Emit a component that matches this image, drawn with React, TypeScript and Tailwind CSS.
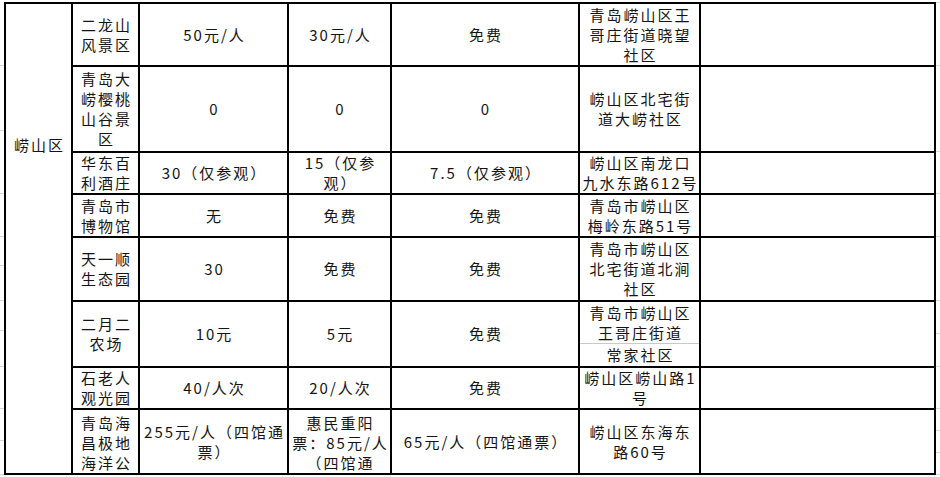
import React from "react";

type Cell = {
  lines: string[];
  top?: boolean;
  split?: { upper: string[]; lower: string[] };
};

type Row = {
  h: string;
  cells: Cell[];
};

// widths include the 2px right rule
const colW = ["w-[67px]", "w-[149px]", "w-[103px]", "w-[188px]", "w-[121px]", "w-[235px]"];

const rows: Row[] = [
  {
    h: "h-[63px]",
    cells: [
      { lines: ["二龙山", "风景区"] },
      { lines: ["50元/人"] },
      { lines: ["30元/人"] },
      { lines: ["免费"] },
      { lines: ["青岛崂山区王", "哥庄街道晓望", "社区"] },
      { lines: [] },
    ],
  },
  {
    h: "h-[86px]",
    cells: [
      { lines: ["青岛大", "崂樱桃", "山谷景", "区"] },
      { lines: ["0"] },
      { lines: ["0"] },
      { lines: ["0"] },
      { lines: ["崂山区北宅街", "道大崂社区"] },
      { lines: [] },
    ],
  },
  {
    h: "h-[42px]",
    cells: [
      { lines: ["华东百", "利酒庄"] },
      { lines: ["30（仅参观）"] },
      { lines: ["15（仅参", "观）"] },
      { lines: ["7.5（仅参观）"] },
      { lines: ["崂山区南龙口", "九水东路612号"] },
      { lines: [] },
    ],
  },
  {
    h: "h-[43px]",
    cells: [
      { lines: ["青岛市", "博物馆"] },
      { lines: ["无"] },
      { lines: ["免费"] },
      { lines: ["免费"] },
      { lines: ["青岛市崂山区", "梅岭东路51号"] },
      { lines: [] },
    ],
  },
  {
    h: "h-[64px]",
    cells: [
      { lines: ["天一顺", "生态园"] },
      { lines: ["30"] },
      { lines: ["免费"] },
      { lines: ["免费"] },
      { lines: ["青岛市崂山区", "北宅街道北涧", "社区"] },
      { lines: [] },
    ],
  },
  {
    h: "h-[66px]",
    cells: [
      { lines: ["二月二", "农场"] },
      { lines: ["10元"] },
      { lines: ["5元"] },
      { lines: ["免费"] },
      { lines: [], split: { upper: ["青岛市崂山区", "王哥庄街道"], lower: ["常家社区"] } },
      { lines: [] },
    ],
  },
  {
    h: "h-[42px]",
    cells: [
      { lines: ["石老人", "观光园"] },
      { lines: ["40/人次"] },
      { lines: ["20/人次"] },
      { lines: ["免费"] },
      { lines: ["崂山区崂山路1", "号"] },
      { lines: [] },
    ],
  },
  {
    // last row runs past the bottom of the shot, so only the visible lines are here
    h: "h-[65px]",
    cells: [
      { lines: ["青岛海", "昌极地", "海洋公"], top: true },
      { lines: ["255元/人（四馆通", "票）"] },
      { lines: ["惠民重阳", "票：85元/人", "（四馆通"], top: true },
      { lines: ["65元/人（四馆通票）"] },
      { lines: ["崂山区东海东", "路60号"] },
      { lines: [] },
    ],
  },
];

function Lines({ lines }: { lines: string[] }) {
  return (
    <>
      {lines.map((l, i) => (
        <div key={i} className="whitespace-nowrap pl-[2px] tracking-[2px] leading-[20px]">
          {l}
        </div>
      ))}
    </>
  );
}

function TableCell({ cell, w }: { cell: Cell; w: string }) {
  if (cell.split) {
    return (
      <div className={`${w} h-full shrink-0 border-r-2 border-black flex flex-col overflow-hidden`}>
        <div className="h-[42px] shrink-0 flex flex-col items-center justify-center border-b border-[#c9c9c9]">
          <Lines lines={cell.split.upper} />
        </div>
        <div className="flex-1 flex flex-col items-center justify-center">
          <Lines lines={cell.split.lower} />
        </div>
      </div>
    );
  }
  return (
    <div
      className={`${w} h-full shrink-0 border-r-2 border-black flex flex-col items-center overflow-hidden text-center ${
        cell.top ? "justify-start pt-[3px]" : "justify-center"
      }`}
    >
      <Lines lines={cell.lines} />
    </div>
  );
}

// faint spreadsheet gridlines outside the table
const stubsLeft = [65, 130, 193, 236, 265, 300, 330, 366, 408, 440, 474];
const stubsRight = [2, 65, 151, 193, 236, 300, 333, 366, 408, 430, 452, 474];

function Stubs({ ys, w }: { ys: number[]; w: string }) {
  return (
    <div className={`${w} h-full relative shrink-0`}>
      {ys.map((y) => (
        <div key={y} className="absolute left-0 right-0 h-px bg-[#d6d6d6]" style={{ top: y }} />
      ))}
    </div>
  );
}

export default function App() {
  return (
    <div
      className="w-[940px] h-[477px] bg-white flex overflow-hidden text-[15px] text-[#141414]"
      style={{ fontFamily: '"Noto Sans CJK SC", "Noto Sans", sans-serif' }}
    >
      <Stubs ys={stubsLeft} w="w-[4px]" />
      <div className="mt-[2px] h-[473px] flex border-l-2 border-t-2 border-black shrink-0">
        <div className="w-[67px] h-[471px] shrink-0 border-r-2 border-b-2 border-black flex flex-col items-center pt-[131px]">
          <Lines lines={["崂山区"]} />
        </div>
        <div className="flex flex-col">
          {rows.map((r, i) => (
            <div key={i} className={`${r.h} flex border-b-2 border-black`}>
              {r.cells.map((c, j) => (
                <TableCell key={j} cell={c} w={colW[j]} />
              ))}
            </div>
          ))}
        </div>
      </div>
      <Stubs ys={stubsRight} w="flex-1" />
    </div>
  );
}
